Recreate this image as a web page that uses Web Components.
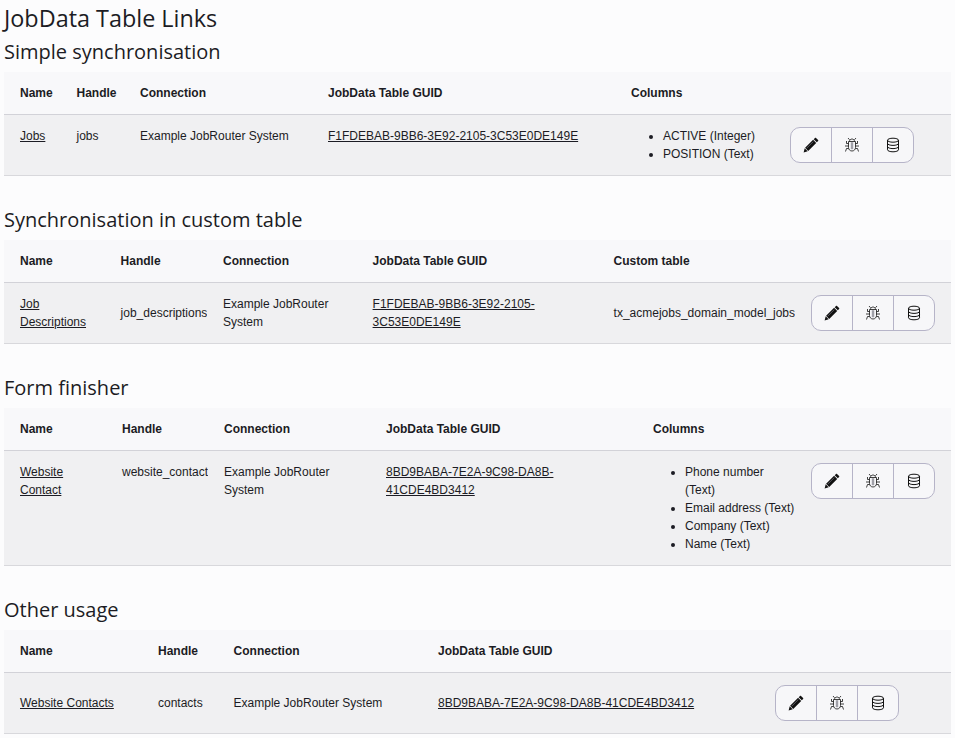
<!DOCTYPE html>
<html lang="en">
<head>
<meta charset="utf-8">
<title>JobData Table Links</title>
<style>
    html, body { margin: 0; background: #fcfcfd; }
    body { padding: 0 4px; color: #1c1c24; font: 12px/18px "Liberation Sans", Arial, sans-serif; }
</style>
</head>
<body>
<page-title>JobData Table Links</page-title>

<job-section heading="Simple synchronisation">
    <job-table cols="56.5px 63.5px 188px 303px 159px 177px">
        <job-cell head>Name</job-cell><job-cell head>Handle</job-cell><job-cell head>Connection</job-cell><job-cell head>JobData Table GUID</job-cell><job-cell head>Columns</job-cell><job-cell head></job-cell>
        <job-cell><job-link>Jobs</job-link></job-cell>
        <job-cell>jobs</job-cell>
        <job-cell>Example JobRouter System</job-cell>
        <job-cell><job-link>F1FDEBAB-9BB6-3E92-2105-3C53E0DE149E</job-link></job-cell>
        <job-cell flush><job-list><job-item>ACTIVE (Integer)</job-item><job-item>POSITION (Text)</job-item></job-list></job-cell>
        <job-cell><action-group></action-group></job-cell>
    </job-table>
</job-section>

<job-section heading="Synchronisation in custom table">
    <job-table cols="100.6px 102.4px 149.6px 241px 197.4px 156px" style="--cell-align: center">
        <job-cell head>Name</job-cell><job-cell head>Handle</job-cell><job-cell head>Connection</job-cell><job-cell head>JobData Table GUID</job-cell><job-cell head>Custom table</job-cell><job-cell head></job-cell>
        <job-cell><job-link>Job Descriptions</job-link></job-cell>
        <job-cell>job_descriptions</job-cell>
        <job-cell>Example JobRouter System</job-cell>
        <job-cell><job-link>F1FDEBAB-9BB6-3E92-2105-3C53E0DE149E</job-link></job-cell>
        <job-cell>tx_acmejobs_domain_model_jobs</job-cell>
        <job-cell><action-group></action-group></job-cell>
    </job-table>
</job-section>

<job-section heading="Form finisher">
    <job-table cols="102px 102px 162px 267px 158px 156px">
        <job-cell head>Name</job-cell><job-cell head>Handle</job-cell><job-cell head>Connection</job-cell><job-cell head>JobData Table GUID</job-cell><job-cell head>Columns</job-cell><job-cell head></job-cell>
        <job-cell><job-link>Website Contact</job-link></job-cell>
        <job-cell>website_contact</job-cell>
        <job-cell>Example JobRouter System</job-cell>
        <job-cell><job-link>8BD9BABA-7E2A-9C98-DA8B-41CDE4BD3412</job-link></job-cell>
        <job-cell flush><job-list><job-item>Phone number (Text)</job-item><job-item>Email address (Text)</job-item><job-item>Company (Text)</job-item><job-item>Name (Text)</job-item></job-list></job-cell>
        <job-cell><action-group></action-group></job-cell>
    </job-table>
</job-section>

<job-section heading="Other usage">
    <job-table cols="138px 75.6px 204.4px 337px 192px" style="--cell-align: center">
        <job-cell head>Name</job-cell><job-cell head>Handle</job-cell><job-cell head>Connection</job-cell><job-cell head>JobData Table GUID</job-cell><job-cell head></job-cell>
        <job-cell><job-link>Website Contacts</job-link></job-cell>
        <job-cell>contacts</job-cell>
        <job-cell>Example JobRouter System</job-cell>
        <job-cell><job-link>8BD9BABA-7E2A-9C98-DA8B-41CDE4BD3412</job-link></job-cell>
        <job-cell><action-group></action-group></job-cell>
    </job-table>
</job-section>

<script>
const HEADING_FONT = '"Open Sans", "Noto Sans", sans-serif';

const ICONS = {
    edit: `<path d="M12 .9c.3-.3.7-.3 1 0l2.1 2.1c.3.3.3.7 0 1l-1.3 1.3-3.1-3.1zM10.1 2.8l3.1 3.1-8 8-3.1-3.1z" fill="currentColor"/>
        <path d="M3.6 11.3l6.6-6.6" stroke="#77777f" stroke-width=".7"/>
        <path d="M1.7 11.3l3 3-4.1 1.1z" fill="currentColor"/>`,
    debug: `<g fill="none" stroke="currentColor" stroke-width=".8">
            <path d="M4.5 4.5h7v6c0 2-1.5 3.5-3.5 3.5s-3.5-1.5-3.5-3.5z"/>
            <path d="M5.5 4.5C5.5 3 6.6 2 8 2s2.5 1 2.5 2.5"/>
            <path d="M5.6 2.8L4 1M10.4 2.8L12 1M4.5 6.5h-2V4M11.5 6.5h2V4M4.5 9H1M11.5 9H15M4.5 11.5h-2L1.5 14.5M11.5 11.5h2l1 3"/>
        </g>
        <rect x="6.8" y="5.2" width="2.4" height="7" fill="#a0a0a8"/>`,
    database: `<g fill="none" stroke="currentColor" stroke-width="1">
            <ellipse cx="8" cy="3.2" rx="5.5" ry="2"/>
            <path d="M2.5 3.2v9.6c0 1.1 2.5 2 5.5 2s5.5-.9 5.5-2V3.2"/>
            <path d="M2.5 6.4c0 1.1 2.5 2 5.5 2s5.5-.9 5.5-2M2.5 9.6c0 1.1 2.5 2 5.5 2s5.5-.9 5.5-2"/>
        </g>`
};

class PageTitle extends HTMLElement {
    constructor() {
        super();
        this.attachShadow({ mode: 'open' });
        this.shadowRoot.innerHTML = `
            <style>
                :host { display: block; height: 32px; }
                h1 { margin: 0; padding-top: 2px; font: 400 23.4px/32px ${HEADING_FONT}; }
            </style>
            <h1><slot></slot></h1>
        `;
    }
}

class JobSection extends HTMLElement {
    constructor() {
        super();
        this.attachShadow({ mode: 'open' });
        this.shadowRoot.innerHTML = `
            <style>
                :host { display: block; margin-bottom: 24px; }
                h2 { margin: 0; font: 400 20px/40px ${HEADING_FONT}; }
            </style>
            <h2></h2>
            <slot></slot>
        `;
    }

    connectedCallback() {
        this.shadowRoot.querySelector('h2').textContent = this.getAttribute('heading');
    }
}

class JobTable extends HTMLElement {
    constructor() {
        super();
        this.attachShadow({ mode: 'open' });
        this.shadowRoot.innerHTML = `
            <style>
                :host { display: grid; }
            </style>
            <slot></slot>
        `;
    }

    connectedCallback() {
        this.style.gridTemplateColumns = this.getAttribute('cols');
    }
}

class JobCell extends HTMLElement {
    constructor() {
        super();
        this.attachShadow({ mode: 'open' });
        this.shadowRoot.innerHTML = `
            <style>
                :host {
                    display: flex;
                    align-items: var(--cell-align, flex-start);
                    box-sizing: border-box;
                    min-width: 0;
                    padding: 12px 16px;
                    background: #f0f0f2;
                    border-bottom: 1px solid #d8d8dc;
                }
                :host([head]) {
                    align-items: center;
                    background: #f8f8fa;
                    border-bottom-color: #d2d2d8;
                    font-weight: 700;
                }
                :host([flush]) { padding-right: 0; }
                div { min-width: 0; }
            </style>
            <div><slot></slot></div>
        `;
    }
}

class JobLink extends HTMLElement {
    constructor() {
        super();
        this.attachShadow({ mode: 'open' });
        this.shadowRoot.innerHTML = `
            <style>
                a { color: inherit; text-decoration: underline; }
            </style>
            <a href="#"><slot></slot></a>
        `;
    }
}

class JobList extends HTMLElement {
    constructor() {
        super();
        this.attachShadow({ mode: 'open' });
        this.shadowRoot.innerHTML = `
            <style>
                :host { display: block; }
                ul { margin: 0; padding: 0 0 0 32px; }
            </style>
            <ul><slot></slot></ul>
        `;
    }
}

class JobItem extends HTMLElement {
    constructor() {
        super();
        this.attachShadow({ mode: 'open' });
        this.shadowRoot.innerHTML = `
            <style>
                :host { display: list-item; list-style: disc outside; }
            </style>
            <slot></slot>
        `;
    }
}

class ActionGroup extends HTMLElement {
    constructor() {
        super();
        this.attachShadow({ mode: 'open' });
        this.shadowRoot.innerHTML = `
            <style>
                :host {
                    display: flex;
                    width: 124px;
                    height: 36px;
                    box-sizing: border-box;
                    background: #f7f7f9;
                    border: 1px solid #b6b4c8;
                    border-radius: 10px;
                    color: #111;
                }
                span { flex: 1; display: flex; align-items: center; justify-content: center; }
                span + span { border-left: 1px solid #b6b4c8; }
                svg { width: 16px; height: 16px; }
            </style>
            ${Object.values(ICONS).map(icon => `<span><svg viewBox="0 0 16 16">${icon}</svg></span>`).join('')}
        `;
    }
}

customElements.define('page-title', PageTitle);
customElements.define('job-section', JobSection);
customElements.define('job-table', JobTable);
customElements.define('job-cell', JobCell);
customElements.define('job-link', JobLink);
customElements.define('job-list', JobList);
customElements.define('job-item', JobItem);
customElements.define('action-group', ActionGroup);
</script>
</body>
</html>
